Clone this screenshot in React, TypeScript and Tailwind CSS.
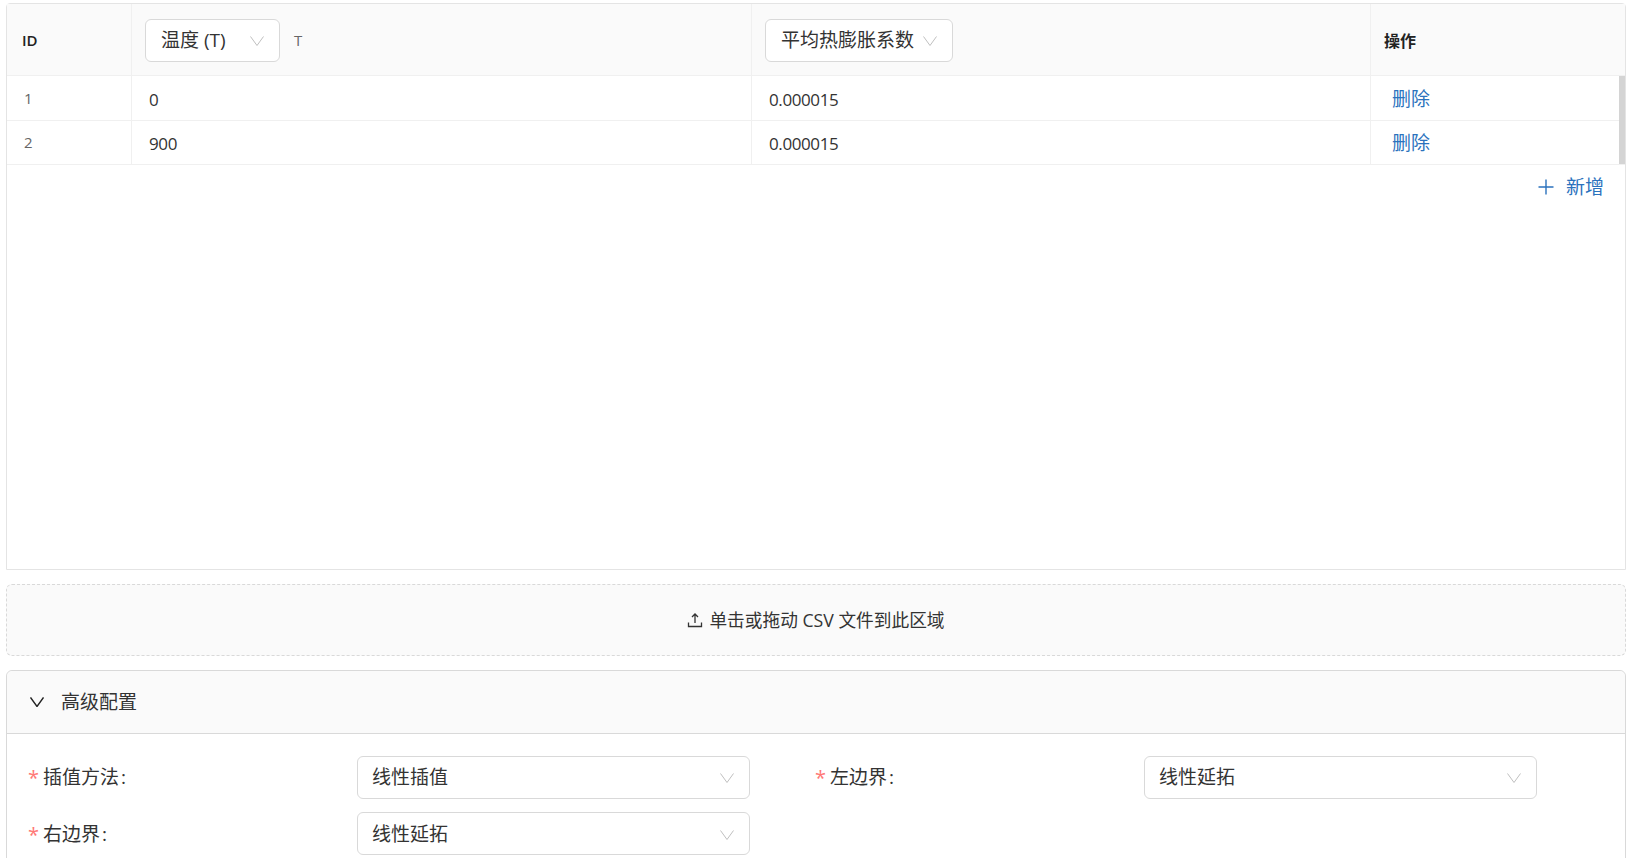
import React from 'react';

const font = { fontFamily: '"Open Sans", "Noto Sans CJK SC", sans-serif' };

const Chevron = ({ className = 'text-[#bfbfbf]', weight = 1 }: { className?: string; weight?: number }) => (
  <svg width="14" height="10" viewBox="0 0 14 10" fill="none" className={className}>
    <path d="M0.5 0.5L7 9.5L13.5 0.5" stroke="currentColor" strokeWidth={weight} />
  </svg>
);

const HeaderSelect = ({ label, width, gap }: { label: string; width: string; gap: string }) => (
  <div className={`flex items-center h-[43px] mt-[2px] ${width} ${gap} pl-[15px] bg-white border border-[#d9d9d9] rounded-md text-[19px] text-[#333]`}>
    <span>{label}</span>
    <Chevron />
  </div>
);

const rows = [
  { id: 1, t: '0', v: '0.000015', h: 'h-[45px]', pad: 'pt-[3px]' },
  { id: 2, t: '900', v: '0.000015', h: 'h-[44px]', pad: 'pt-[2px]' },
];

const FormSelect = ({ label, value, pad = '' }: { label: string; value: string; pad?: string }) => (
  <div className="flex items-center h-[43px]">
    <div className={`w-[333px] pl-[4px] ${pad} text-[19px] text-[#333] flex items-center`}>
      <span className="text-[#ff7875] mr-[4px] text-[20px] leading-none">*</span>
      <span>{label}</span>
      <span className="ml-[2px]">:</span>
    </div>
    <div className={`w-[393px] h-[43px] flex items-center justify-between pl-[14px] pr-[15px] ${pad} border border-[#d9d9d9] rounded-md text-[19px] text-[#333] bg-white`}>
      <span>{value}</span>
      <Chevron />
    </div>
  </div>
);

export default function App() {
  return (
    <div className="h-screen overflow-hidden bg-white pt-[3px] pl-[6px] pr-[4px]" style={font}>
      <div className="h-[567px] border border-[#e4e4e4] rounded-t-sm">
        <div className="flex h-[72px] bg-[#fafafa] border-b border-[#f0f0f0]">
          <div className="w-[125px] flex items-center pl-[15px] pt-[1px] border-r border-[#f0f0f0] text-[15px] font-semibold text-[#222]">ID</div>
          <div className="w-[620px] flex items-center pl-[13px] border-r border-[#f0f0f0]">
            <HeaderSelect label="温度 (T)" width="w-[135px]" gap="gap-[24px]" />
            <span className="ml-[14px] mt-[2px] text-[15px] text-[#666]">T</span>
          </div>
          <div className="w-[619px] flex items-center pl-[13px] border-r border-[#f0f0f0]">
            <HeaderSelect label="平均热膨胀系数" width="w-[188px]" gap="gap-[9px]" />
          </div>
          <div className="flex-1 flex items-center pl-[13px] pt-[3px] text-[16px] font-bold text-[#222]">操作</div>
        </div>
        <div className="relative">
          {rows.map(r => (
            <div key={r.id} className={`flex ${r.h} border-b border-[#f0f0f0] items-stretch`}>
              <div className="w-[125px] flex items-center pl-[17px] border-r border-[#f0f0f0] text-[15px] text-[#666]">{r.id}</div>
              <div className={`w-[620px] flex items-center pl-[17px] ${r.pad} border-r border-[#f0f0f0] text-[17px] tracking-[-0.4px] text-[#333]`}>{r.t}</div>
              <div className={`w-[619px] flex items-center pl-[17px] ${r.pad} border-r border-[#f0f0f0] text-[17px] tracking-[-0.4px] text-[#333]`}>{r.v}</div>
              <div className="flex-1 flex items-center pl-[21px] pt-[2px] text-[19px] text-[#2b72bd]">删除</div>
            </div>
          ))}
          <div className="absolute right-0 top-0 w-[6px] h-[88px] bg-[#d4d4d4]" />
        </div>
        <div className="flex items-center justify-end h-[44px] pr-[21px] gap-[12px] text-[#2b72bd]">
          <svg width="16" height="16" viewBox="0 0 16 16" fill="none">
            <path d="M8 0.5V15.5M0.5 8H15.5" stroke="currentColor" strokeWidth="1.4" />
          </svg>
          <span className="text-[19px]">新增</span>
        </div>
      </div>

      <div className="mt-[14px] h-[72px] flex items-center justify-center gap-[6px] bg-[#fafafa] border border-dashed border-[#d9d9d9] rounded-md text-[17.7px] text-[#333]">
        <svg width="16" height="16" viewBox="0 0 16 16" fill="none" stroke="#333" strokeWidth="1.3">
          <path d="M8 11V2M5 5L8 2L11 5M1.5 10.5V14.5H14.5V10.5" />
        </svg>
        <span>单击或拖动 CSV 文件到此区域</span>
      </div>

      <div className="mt-[14px] border border-[#d9d9d9] rounded-t-md">
        <div className="flex items-center h-[63px] pl-[23px] gap-[17px] bg-[#fafafa] border-b border-[#d9d9d9] text-[19px] text-[#333] rounded-t-md">
          <Chevron className="text-[#222]" weight={1.4} />
          <span>高级配置</span>
        </div>
        <div className="pt-[22px] pl-[17px] pb-[12px] grid grid-cols-[787px_787px] gap-y-[13px]">
          <FormSelect label="插值方法" value="线性插值" />
          <FormSelect label="左边界" value="线性延拓" />
          <FormSelect label="右边界" value="线性延拓" pad="pt-[2px]" />
        </div>
      </div>
    </div>
  );
}
